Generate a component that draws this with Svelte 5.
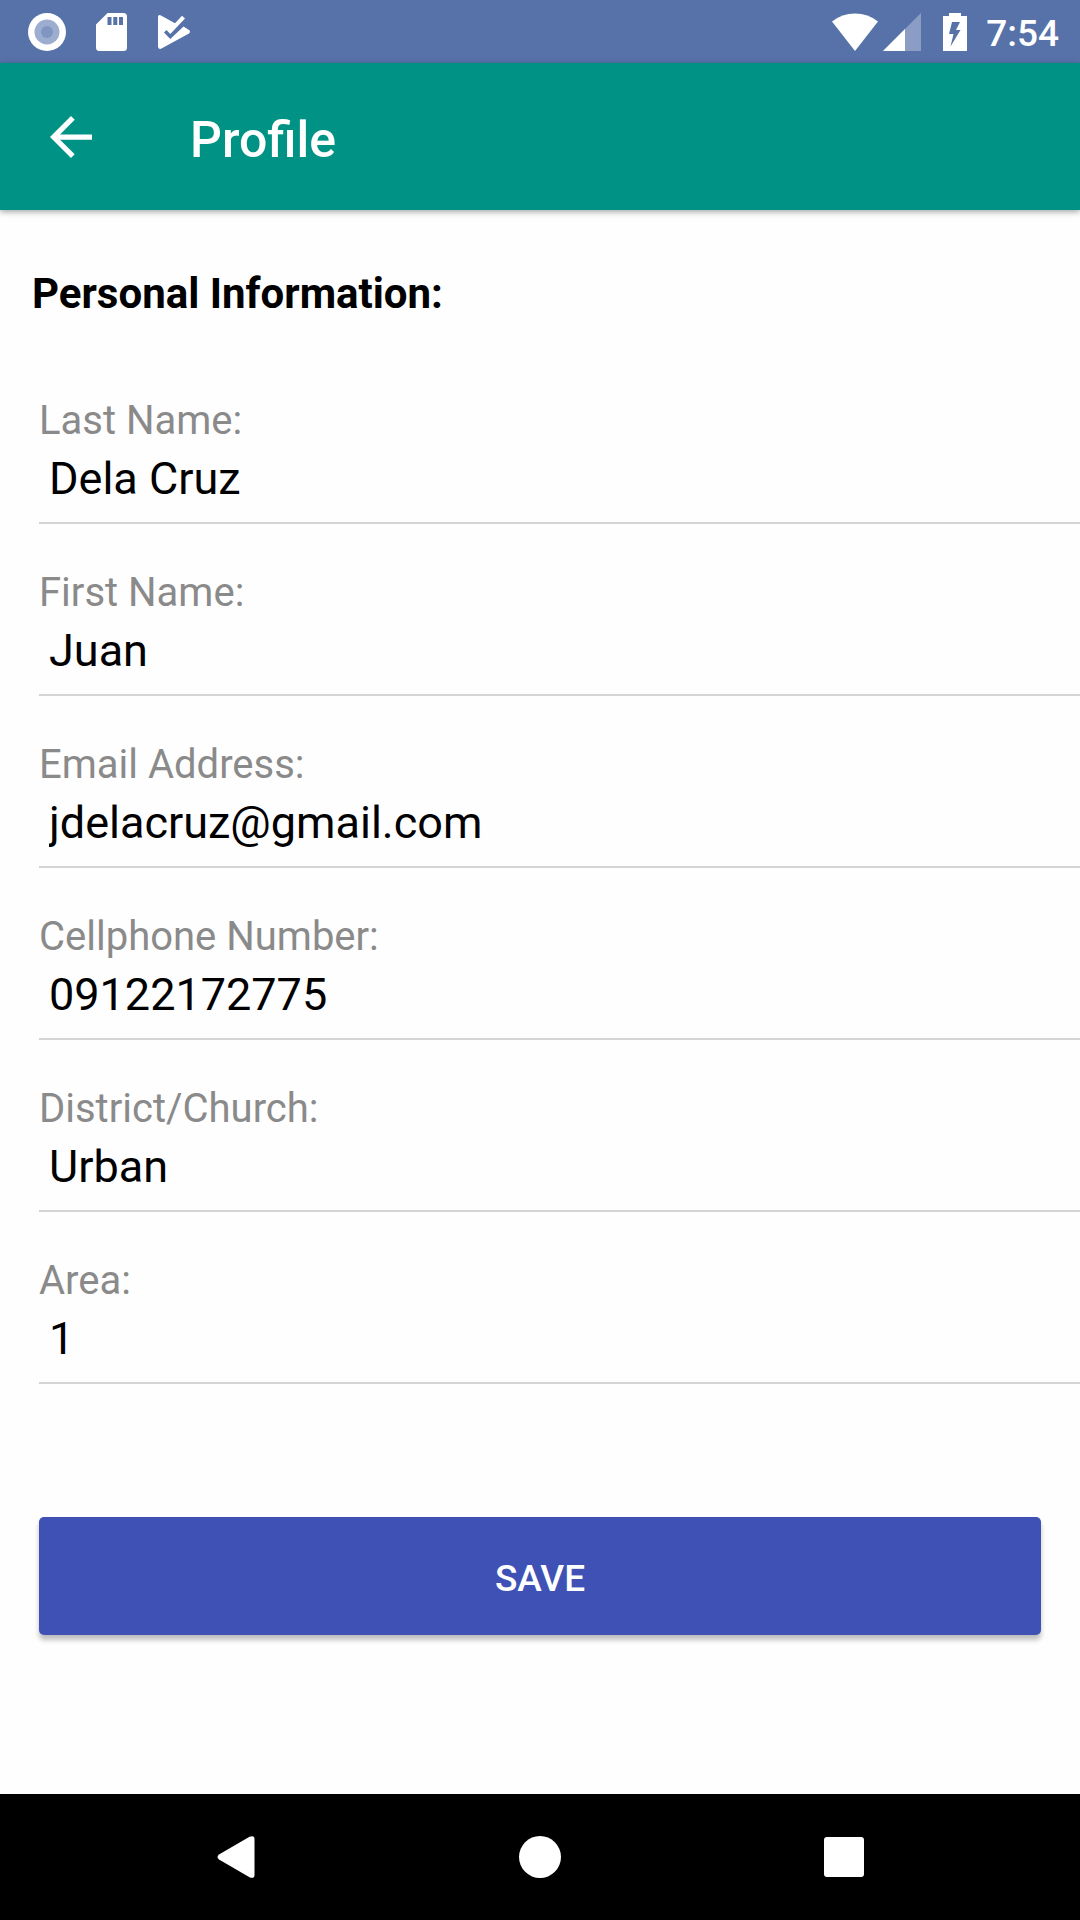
<script lang="ts">
	interface Field {
		id: string;
		label: string;
		type: string;
		value: string;
	}

	let fields: Field[] = $state([
		{ id: 'last-name', label: 'Last Name:', type: 'text', value: 'Dela Cruz' },
		{ id: 'first-name', label: 'First Name:', type: 'text', value: 'Juan' },
		{ id: 'email', label: 'Email Address:', type: 'email', value: 'jdelacruz@gmail.com' },
		{ id: 'cellphone', label: 'Cellphone Number:', type: 'tel', value: '09122172775' },
		{ id: 'district', label: 'District/Church:', type: 'text', value: 'Urban' },
		{ id: 'area', label: 'Area:', type: 'text', value: '1' }
	]);

	function save(event: SubmitEvent) {
		event.preventDefault();
	}
</script>

<div class="screen">
	<div class="status-bar">
		<div class="notifications">
			<svg width="38" height="38" viewBox="0 0 38 38" aria-hidden="true">
				<circle cx="19" cy="19" r="19" fill="#fff" />
				<circle cx="19" cy="19" r="12.5" fill="#9dadd0" />
				<circle cx="19" cy="19" r="6" fill="#8195c2" />
			</svg>
			<svg width="31" height="38" viewBox="0 0 31 38" aria-hidden="true">
				<path
					fill="#fff"
					fill-rule="evenodd"
					d="M11.5 0H27.5a3.5 3.5 0 0 1 3.5 3.5v31a3.5 3.5 0 0 1-3.5 3.5h-24A3.5 3.5 0 0 1 0 34.5V11.5ZM11.5 4v8h4V4ZM17.3 4v8h4V4ZM23 4v8h4V4Z"
				/>
			</svg>
			<svg width="34" height="36" viewBox="-1 0 34 36" aria-hidden="true">
				<path
					fill="#fff"
					d="M2.5 1.2 17 9.3 24 1.8 27 4.5 12.3 20 8.5 16 6 18.5 12.3 25 25.5 12.5 31 16Q33 17.7 31 19.5L3 34.8Q0 35.5 0 32.5V3Q0 .5 2.5 1.2Z"
				/>
			</svg>
		</div>
		<div class="system">
			<svg width="46" height="38" viewBox="0 0 46 38" aria-hidden="true">
				<path fill="#fff" d="M23 38 0 8.5Q10 .5 23 .5T46 8.5Z" />
			</svg>
			<svg class="signal" width="38" height="38" viewBox="0 0 38 38" aria-hidden="true">
				<path fill="#8b9dc4" d="M38 0V38H0Z" />
				<path fill="#fff" d="M22 16V38H0Z" />
			</svg>
			<svg class="battery" width="24" height="38" viewBox="0 0 24 38" aria-hidden="true">
				<path
					fill="#fff"
					fill-rule="evenodd"
					d="M6 0H18V3H24V38H0V3H6ZM9 9 6 21h4.5L7.5 33.5 17.5 17H13L17 9Z"
				/>
			</svg>
			<span class="clock">7:54</span>
		</div>
	</div>

	<header class="app-bar">
		<button class="back" type="button" aria-label="Back">
			<svg width="42" height="42" viewBox="4 4 16 16" aria-hidden="true">
				<path
					fill="#fff"
					d="M20 11H7.83l5.59-5.59L12 4l-8 8 8 8 1.41-1.41L7.83 13H20v-2z"
				/>
			</svg>
		</button>
		<h1>Profile</h1>
	</header>

	<main>
		<h2>Personal Information:</h2>
		<form onsubmit={save}>
			{#each fields as field (field.id)}
				<div class="field">
					<label for={field.id}>{field.label}</label>
					<input id={field.id} type={field.type} bind:value={field.value} />
				</div>
			{/each}
			<button class="save" type="submit">SAVE</button>
		</form>
	</main>

	<nav class="nav-bar">
		<button type="button" aria-label="Back">
			<svg width="42" height="42" viewBox="0 0 42 42" aria-hidden="true">
				<path
					fill="#fff"
					d="M4 18.5 34.5.7Q39.5-1 39.5 3V39Q39.5 43 34.5 41.3L4 23.5Q1 21 4 18.5Z"
				/>
			</svg>
		</button>
		<button type="button" aria-label="Home">
			<svg width="42" height="42" viewBox="0 0 42 42" aria-hidden="true">
				<circle cx="21" cy="21" r="21" fill="#fff" />
			</svg>
		</button>
		<button type="button" aria-label="Overview">
			<svg width="42" height="42" viewBox="0 0 42 42" aria-hidden="true">
				<rect x="1" y="1" width="40" height="40" rx="3" fill="#fff" />
			</svg>
		</button>
	</nav>
</div>

<style>
	:global(body) {
		margin: 0;
		background: #fff;
	}

	.screen {
		display: flex;
		flex-direction: column;
		min-height: 100vh;
		overflow-x: hidden;
		background: #fefefe;
		color: #000;
		font-family: Roboto, 'Liberation Sans', sans-serif;
	}

	svg {
		display: block;
		flex: none;
	}

	button {
		margin: 0;
		padding: 0;
		border: none;
		background: none;
		font-family: inherit;
		cursor: pointer;
	}

	.status-bar {
		display: flex;
		align-items: center;
		justify-content: space-between;
		height: 63px;
		padding: 0 21px 0 28px;
		box-sizing: border-box;
		background: #5672a8;
		color: #fff;
	}

	.notifications {
		display: flex;
		align-items: center;
		gap: 30px;
	}

	.system {
		display: flex;
		align-items: center;
	}

	.signal {
		margin-left: 5px;
	}

	.battery {
		margin-left: 22px;
	}

	.clock {
		margin-left: 19px;
		padding-top: 4px;
		font-size: 37px;
		line-height: 44px;
		font-weight: 500;
	}

	.app-bar {
		position: relative;
		display: flex;
		align-items: center;
		height: 147px;
		background: #009385;
		box-shadow: 0 2px 6px rgba(0, 0, 0, 0.35);
		color: #fff;
	}

	.back {
		display: grid;
		place-items: center;
		width: 142px;
		height: 100%;
	}

	h1 {
		margin: 0 0 0 48px;
		padding-top: 6px;
		font-size: 50px;
		line-height: 60px;
		font-weight: 500;
	}

	main {
		flex: 1;
		padding: 59px 0 60px;
	}

	h2 {
		margin: 0 32px 78px;
		font-size: 42px;
		line-height: 50px;
		font-weight: 700;
	}

	form {
		display: flex;
		flex-direction: column;
		padding-left: 39px;
	}

	.field {
		display: flex;
		flex-direction: column;
		gap: 6px;
		margin-bottom: 45px;
		padding-bottom: 15px;
		border-bottom: 2px solid #d5d5d5;
	}

	label {
		font-size: 40px;
		line-height: 48px;
		color: #8a8a8a;
	}

	input {
		width: 100%;
		height: 56px;
		padding: 0 10px;
		border: none;
		outline: none;
		box-sizing: border-box;
		background: transparent;
		color: #000;
		font-family: inherit;
		font-size: 45px;
		line-height: 56px;
	}

	.save {
		height: 118px;
		margin: 88px 39px 0 0;
		padding-top: 5px;
		border-radius: 5px;
		background: #3f51b5;
		box-shadow: 0 5px 5px rgba(0, 0, 0, 0.25);
		color: #fff;
		font-size: 37px;
		line-height: 44px;
		font-weight: 500;
	}

	.nav-bar {
		display: flex;
		justify-content: center;
		gap: 2px;
		height: 126px;
		background: #000;
	}

	.nav-bar button {
		display: grid;
		place-items: center;
		width: 28%;
	}
</style>
